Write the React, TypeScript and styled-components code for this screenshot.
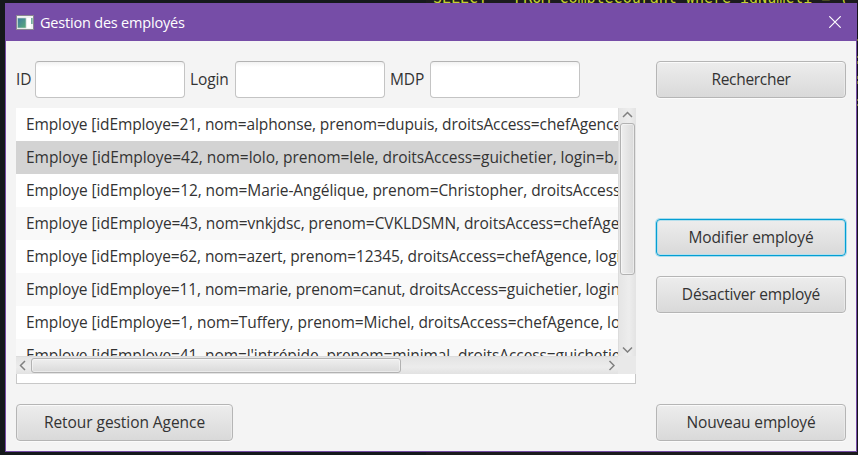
import React from "react";
import styled, { createGlobalStyle, css } from "styled-components";

const GlobalStyle = createGlobalStyle`
  * { box-sizing: border-box; }
  body { margin: 0; background: #191c1f; overflow: hidden; }
`;

const Desktop = styled.div`
  width: 858px;
  height: 455px;
  display: flex;
  flex-direction: column;
  background:
    linear-gradient(
      #16131c 39px, #6d7030 39px 41px, #16131c 41px 56px, #6d7030 56px 58px,
      #16131c 58px 61px, #6d7030 61px 64px, #16131c 64px 76px, #6d7030 76px 79px,
      #16131c 79px 81px, #6d7030 81px 84px, #16131c 84px 99px, #6d7030 99px 101px,
      #16131c 101px 104px, #6d7030 104px 106px, #16131c 106px
    ) right / 1px 100% no-repeat,
    linear-gradient(90deg, #15191c 0 426px, #1b1b1d 426px);
  font-family: "Open Sans", "Noto Sans", sans-serif;
  font-size: 15.5px;
  color: #333;
`;

const EditorLine = styled.div`
  height: 3px;
  flex: none;
  padding-left: 433px;
  display: flex;
  align-items: flex-end;
  overflow: hidden;
  white-space: pre;
  color: #c3d02e;
  font: 15px/17px "DejaVu Sans Mono", monospace;

  span { margin-bottom: -4px; }
`;

const Window = styled.main`
  width: 852px;
  height: 449px;
  margin-left: 5px;
  display: flex;
  flex-direction: column;
  border: 1px solid #764da7;
  background: #f4f4f4;
`;

const TitleBar = styled.header`
  height: 37px;
  flex: none;
  display: flex;
  align-items: center;
  padding: 0 15px 1px 10px;
  background: #764da7;
  color: #fff;
`;

const Title = styled.h1`
  flex: 1;
  margin: 1px 0 0 6px;
  font-size: 14.5px;
  font-weight: 400;
  line-height: 20px;
  letter-spacing: -0.2px;
`;

const Body = styled.div`
  flex: 1;
  display: grid;
  grid-template-columns: 620px 190px;
  column-gap: 20px;
  padding: 20px 10px 10px;
`;

const Column = styled.div`
  display: flex;
  flex-direction: column;
  align-items: flex-start;
`;

const SearchRow = styled.div`
  display: flex;
  align-items: center;
  height: 37px;
  margin-bottom: 10px;
`;

const Label = styled.label<{ $width: number; $gap?: number; $spacing: number }>`
  width: ${(p) => p.$width}px;
  margin-left: ${(p) => p.$gap ?? 0}px;
  padding-bottom: 1px;
  letter-spacing: ${(p) => p.$spacing}px;
  white-space: nowrap;
`;

const Field = styled.input`
  width: 150px;
  height: 37px;
  padding: 0 10px;
  border: 1px solid #c4c4c4;
  border-top-color: #b3b3b3;
  border-radius: 4px;
  background: linear-gradient(#f2f2f2, #fff 5px);
  font: inherit;
  outline: none;
`;

const ListFrame = styled.section`
  width: 620px;
  height: 276px;
  margin-bottom: 20px;
  border: solid #c8c8c8;
  border-width: 0 1px 1px;
  background: #fff;
`;

const ListGrid = styled.div`
  width: 620px;
  height: 266px;
  margin-left: -1px;
  display: grid;
  grid-template: 248px 18px / 602px 18px;
`;

const Rows = styled.ul`
  margin: 0;
  padding: 0;
  overflow: hidden;
  list-style: none;
`;

const Row = styled.li<{ $selected?: boolean; $spacing: number }>`
  height: 33px;
  padding: 0 0 0 10px;
  line-height: 33px;
  white-space: pre;
  letter-spacing: ${(p) => p.$spacing}px;
  background: #fff;
  &:nth-child(even) { background: #f9f9f9; }
  ${(p) => p.$selected && css`&&:nth-child(n) { background: #d3d3d3; }`}
`;

const VerticalBar = styled.div`
  display: flex;
  flex-direction: column;
  align-items: center;
  justify-content: space-between;
  padding: 3px 1px 3px 1px;
  border-left: 1px solid #dcdcdc;
  background: linear-gradient(90deg, #e5e5e5, #ededed 60%, #e3e3e3);
`;

const HorizontalBar = styled.div`
  display: flex;
  align-items: center;
  justify-content: space-between;
  padding: 1px 3px 1px;
  border-top: 1px solid #dcdcdc;
  background: linear-gradient(#e4e4e4, #ececec 60%, #e2e2e2);
`;

const Corner = styled.div`
  background: #e9e9e9;
`;

const Thumb = styled.div<{ $vertical?: boolean }>`
  flex: none;
  border: 1px solid #b2b2b2;
  border-radius: 3px;
  box-shadow: inset 0 0 0 1px rgba(255, 255, 255, 0.45);
  ${(p) =>
    p.$vertical
      ? css`
          width: 15px;
          height: 152px;
          margin: 5px 0 auto;
          background: linear-gradient(90deg, #efefef, #dadada);
        `
      : css`
          width: 370px;
          height: 15px;
          margin: 0 auto 0 5px;
          background: linear-gradient(#efefef, #dadada);
        `}
`;

const Button = styled.button<{ $width?: number; $top?: number; $focused?: boolean; $spacing: number }>`
  width: ${(p) => p.$width ?? 190}px;
  height: 37px;
  margin: ${(p) => p.$top ?? 0}px 0 0;
  padding: 0 0 1px;
  border: 1px solid #b5b5b5;
  border-radius: 4px;
  background: linear-gradient(#ededed, #d9d9d9);
  box-shadow: inset 0 1px 0 #fafafa, inset 1px 0 0 #e9e9e9, inset -1px 0 0 #e9e9e9, 0 1px 0 #fbfbfb;
  color: #333;
  font: inherit;
  letter-spacing: ${(p) => p.$spacing}px;
  ${(p) =>
    p.$focused &&
    css`
      border-color: #039ed3;
      box-shadow: inset 0 0 0 1px #b5dfec, 0 0 0 1px #a9dced;
    `}
`;

const AppIcon = () => (
  <svg width="18" height="15" viewBox="0 0 18 15">
    <defs>
      <linearGradient id="pane" x1="0" y1="0" x2="1" y2="1">
        <stop offset="0" stopColor="#3e78a0" />
        <stop offset="1" stopColor="#5bad78" />
      </linearGradient>
    </defs>
    <path d="M0 0h18v15H0z" fill="#8a8791" />
    <path d="M1 1h16v13H1z" fill="#f1f3f3" />
    <path d="M1.5 3h8.5v10H1.5z" fill="url(#pane)" stroke="#d4dad9" strokeWidth=".6" />
    <path d="M11 3h4v10h-4z" fill="#fff" />
    <path d="M15.3 3h1.2v6h-1.2z" fill="#429078" />
  </svg>
);

const CloseIcon = () => (
  <svg width="12" height="12" viewBox="0 0 12 12" fill="none" stroke="#fff" strokeWidth="1.15">
    <path d="M.3.3l11.4 11.4M11.7.3L.3 11.7" />
  </svg>
);

const arrows = {
  up: "M1 6l4.5-4.5L10 6",
  down: "M1 1.5L5.5 6 10 1.5",
  left: "M6 1L1.5 5.5 6 10",
  right: "M1.5 1L6 5.5 1.5 10",
};

const Arrow = ({ to }: { to: keyof typeof arrows }) => {
  const vertical = to === "up" || to === "down";
  const w = vertical ? 11 : 7;
  const h = vertical ? 7 : 11;
  return (
    <svg width={w} height={h} viewBox={`0 0 ${w} ${h}`} fill="none" stroke="#808080" strokeWidth="1.5">
      <path d={arrows[to]} />
    </svg>
  );
};

const employees = [
  { text: "Employe [idEmploye=21, nom=alphonse, prenom=dupuis, droitsAccess=chefAgence", spacing: -0.11 },
  { text: "Employe [idEmploye=42, nom=lolo, prenom=lele, droitsAccess=guichetier, login=b,", spacing: -0.03, selected: true },
  { text: "Employe [idEmploye=12, nom=Marie-Angélique, prenom=Christopher, droitsAccess", spacing: -0.08 },
  { text: "Employe [idEmploye=43, nom=vnkjdsc, prenom=CVKLDSMN, droitsAccess=chefAgence", spacing: -0.07 },
  { text: "Employe [idEmploye=62, nom=azert, prenom=12345, droitsAccess=chefAgence, login", spacing: -0.11 },
  { text: "Employe [idEmploye=11, nom=marie, prenom=canut, droitsAccess=guichetier, login", spacing: -0.11 },
  { text: "Employe [idEmploye=1, nom=Tuffery, prenom=Michel, droitsAccess=chefAgence, login", spacing: -0.07 },
  { text: "Employe [idEmploye=41, nom=l'intrépide, prenom=minimal, droitsAccess=guichetier", spacing: -0.1 },
];

export default function App() {
  return (
    <Desktop>
      <GlobalStyle />
      <EditorLine>
        <span>SELECT * FROM CompteCourant where idNumCli = (</span>
      </EditorLine>
      <Window>
        <TitleBar>
          <AppIcon />
          <Title>Gestion des employés</Title>
          <CloseIcon />
        </TitleBar>
        <Body>
          <Column>
            <SearchRow>
              <Label $width={19} $spacing={-0.1}>ID</Label>
              <Field aria-label="ID" />
              <Label $width={45} $gap={5} $spacing={-0.1}>Login</Label>
              <Field aria-label="Login" />
              <Label $width={40} $gap={5} $spacing={-0.1}>MDP</Label>
              <Field aria-label="MDP" />
            </SearchRow>
            <ListFrame>
              <ListGrid>
                <Rows>
                  {employees.map((e) => (
                    <Row key={e.text} $selected={e.selected} $spacing={e.spacing}>{e.text}</Row>
                  ))}
                </Rows>
                <VerticalBar>
                  <Arrow to="up" />
                  <Thumb $vertical />
                  <Arrow to="down" />
                </VerticalBar>
                <HorizontalBar>
                  <Arrow to="left" />
                  <Thumb />
                  <Arrow to="right" />
                </HorizontalBar>
                <Corner />
              </ListGrid>
            </ListFrame>
            <Button $width={217} $spacing={-0.06}>Retour gestion Agence</Button>
          </Column>
          <Column>
            <Button $spacing={-0.3}>Rechercher</Button>
            <Button $top={121} $focused $spacing={-0.13}>Modifier employé</Button>
            <Button $top={20} $spacing={-0.2}>Désactiver employé</Button>
            <Button $top={91} $spacing={-0.15}>Nouveau employé</Button>
          </Column>
        </Body>
      </Window>
    </Desktop>
  );
}
